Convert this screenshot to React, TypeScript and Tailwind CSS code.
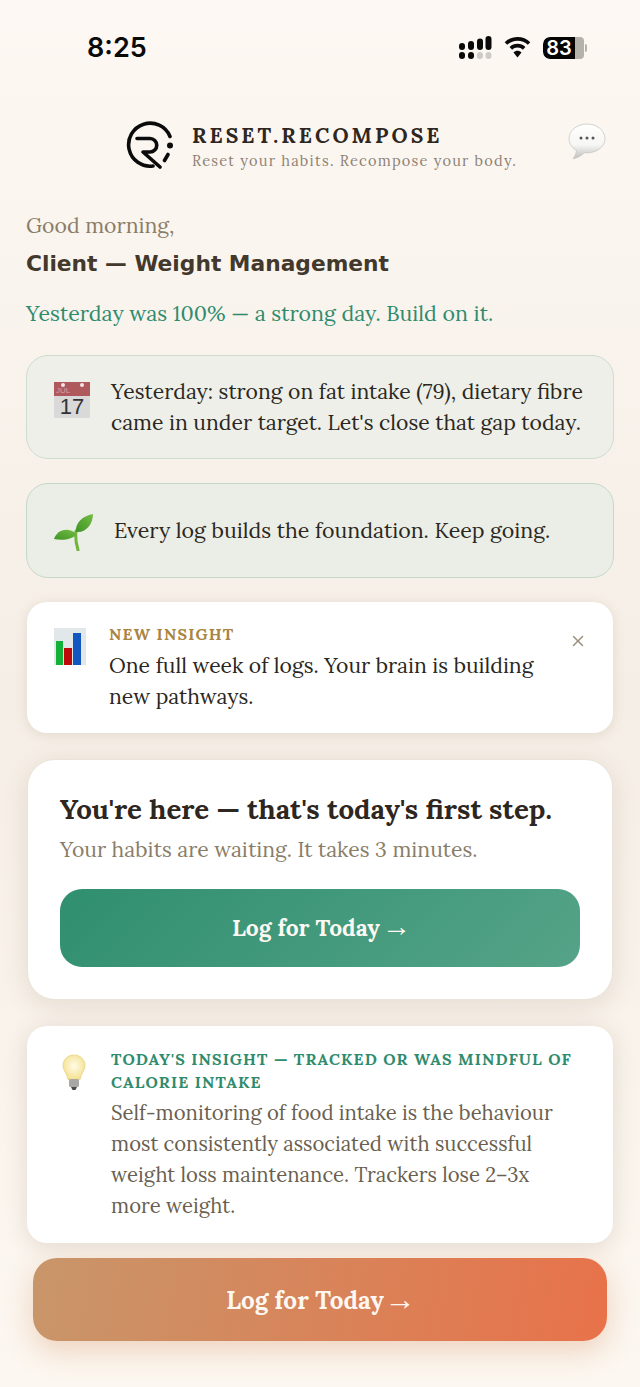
import { X } from "lucide-react";

const serif = "font-['Lora','Liberation_Serif',serif]";

const SignalIcon = () => (
  <svg width="33" height="23" viewBox="0 0 33 23" fill="#0a0a0a">
    <rect x="0" y="7" width="6" height="7" rx="3" />
    <rect x="9" y="5" width="6" height="9" rx="3" />
    <rect x="18" y="2.500" width="6" height="11.500" rx="3" />
    <rect x="26.500" y="0" width="6" height="14" rx="3" />
    <rect x="0" y="16" width="6" height="7" rx="3" />
    <rect x="9" y="16" width="6" height="7" rx="3" />
    <rect x="18" y="16" width="6" height="7" rx="3" fill="#cfccc8" />
    <rect x="26.500" y="16" width="6" height="7" rx="3" fill="#cfccc8" />
  </svg>
);

const WifiIcon = () => (
  <svg width="27" height="21" viewBox="0 0 28 22" fill="#0a0a0a">
    <path d="M14 0C8.800 0 4.100 2 .6 5.400l2.600 2.800C6 5.500 9.800 3.900 14 3.900s8 1.600 10.800 4.300l2.600-2.800C23.900 2 19.200 0 14 0Z" />
    <path d="M14 7.200c-3.200 0-6.100 1.200-8.300 3.300l2.700 2.800c1.500-1.400 3.400-2.200 5.600-2.200s4.100.8 5.600 2.200l2.700-2.800C20.100 8.400 17.200 7.200 14 7.200Z" />
    <path d="M14 14.500c-1.600 0-3.100.6-4.200 1.700L14 21.500l4.200-5.300c-1.100-1.100-2.600-1.700-4.200-1.700Z" />
  </svg>
);

const Logo = () => (
  <svg width="48" height="48" viewBox="0 0 48 48" fill="none" stroke="#0b0b0b" strokeWidth="3.600" strokeLinecap="round" strokeLinejoin="round">
    <path d="M44 15.500A21.500 21.500 0 1 0 27 45" />
    <path d="M11 17.500h13a6.500 6.500 0 0 1 0 13.500H17L34 46" />
    <circle cx="44" cy="24.500" r="3" fill="#0b0b0b" stroke="none" />
    <path d="M42 33.500l-3.500 6" />
  </svg>
);

const ChatBubble = () => (
  <svg width="38" height="38" viewBox="0 0 38 38">
    <defs>
      <linearGradient id="bubble" x1="0" y1="0" x2="0" y2="1">
        <stop offset="0" stopColor="#ffffff" />
        <stop offset=".6" stopColor="#f6f6f4" />
        <stop offset="1" stopColor="#bfc1bf" />
      </linearGradient>
    </defs>
    <path
      d="M19 1C9 1 1 7.500 1 15.500c0 5 3 9.300 7.500 11.900-.3 3-1.700 6-3.500 8.400 4-.8 8.600-3 11.200-6.100.9.100 1.900.2 2.800.2 10 0 18-6.500 18-14.400S29 1 19 1Z"
      fill="url(#bubble)"
      stroke="#c9c7c2"
      strokeWidth=".8"
    />
    <circle cx="13" cy="15" r="1.500" fill="#54565a" />
    <circle cx="19" cy="15" r="1.500" fill="#54565a" />
    <circle cx="25" cy="15" r="1.500" fill="#54565a" />
  </svg>
);

const CalendarIcon = () => (
  <div className="relative flex h-9 w-9 shrink-0 flex-col overflow-hidden">
    <div className="h-[14px] bg-[#b0595c] pl-[2px] font-['Liberation_Sans',sans-serif] text-[8px] leading-[18px] text-[#d9a0a0]">JUL</div>
    <div className="flex h-[22px] items-center justify-center bg-[#d9d9d9] font-['Liberation_Sans',sans-serif] text-[22px] leading-none text-[#333333]">17</div>
    <span className="absolute left-[7px] top-[1px] h-[4px] w-[4px] rounded-full bg-[#f0e6e6]" />
    <span className="absolute left-[26px] top-[1px] h-[4px] w-[4px] rounded-full bg-[#f0e6e6]" />
  </div>
);

const SproutIcon = () => (
  <svg width="40" height="37" viewBox="0 0 40 37" className="mt-[3px] shrink-0">
    <defs>
      <linearGradient id="leaf" x1="0" y1="1" x2="1" y2="0">
        <stop offset="0" stopColor="#3f9426" />
        <stop offset="1" stopColor="#74bd45" />
      </linearGradient>
    </defs>
    <path d="M22 17c-.8 6 .2 13 2 19" stroke="#6fb53c" strokeWidth="3" fill="none" strokeLinecap="round" />
    <path d="M0 25C3 16 13 12 23 20c-4 5-14 7-23 5Z" fill="url(#leaf)" />
    <path d="M22 18C21 9 28 2 39 0c0 9-6 19-17 18Z" fill="url(#leaf)" />
  </svg>
);

const ChartIcon = () => (
  <div className="flex h-[37px] w-[32px] shrink-0 items-end gap-[1px] bg-[#e2e8ea] pl-[2px] pr-[1px]">
    <div className="h-[24px] w-[7px] bg-[#12b13a]" />
    <div className="h-[17px] w-[8px] bg-[#bd0a0a]" />
    <div className="h-[32px] w-[8px] bg-[#1057c0]" />
  </div>
);

const BulbIcon = () => (
  <svg width="24" height="37" viewBox="0 0 24 37" className="shrink-0">
    <defs>
      <radialGradient id="glass" cx=".5" cy=".45" r=".6">
        <stop offset="0" stopColor="#fffce8" />
        <stop offset="1" stopColor="#f3df8a" />
      </radialGradient>
    </defs>
    <path d="M12 1C5.800 1 1 5.700 1 11.500c0 5 4 7.500 5 14h12c1-6.500 5-9 5-14C23 5.700 18.200 1 12 1Z" fill="url(#glass)" stroke="#ecd98e" strokeWidth="1" />
    <rect x="7" y="25" width="10" height="8" rx="1.500" fill="#a9a7a6" />
    <path d="M9 33h6l-1.500 3h-3Z" fill="#4b4a4c" />
  </svg>
);

export default function App() {
  return (
    <div className={`${serif} relative flex h-[1387px] w-[640px] flex-col overflow-hidden bg-gradient-to-b from-[#fdf8f3] via-[#f5eee6] to-[#fcf7f0]`}>
      {/* status bar */}
      <div className="flex h-[96px] shrink-0 items-start justify-between pl-[87px] pr-[53px] pt-[30px]">
        <span className="font-['Inter',sans-serif] text-[27px] font-semibold leading-[36px] text-[#0a0a0a]">8:25</span>
        <div className="mt-[6px] flex items-center gap-[12px]">
          <SignalIcon />
          <WifiIcon />
          <div className="flex items-center">
            <div className="flex h-[22px] w-[41px] items-center overflow-hidden rounded-l-[7px] rounded-r-[4px] bg-[#b5b2ac]">
              <div className="flex h-full w-[32px] items-center justify-center rounded-l-[7px] bg-[#050505] font-['Inter',sans-serif] text-[20px] font-semibold text-white">83</div>
            </div>
            <div className="ml-[1px] h-[8px] w-[2px] rounded-r bg-[#b5b2ac]" />
          </div>
        </div>
      </div>

      {/* brand header */}
      <div className="relative mt-[24px] flex h-[50px] shrink-0 items-center pl-[126px]">
        <Logo />
        <div className="ml-[18px] mt-[3px] flex flex-col gap-[1px]">
          <span className="text-[21px] font-bold leading-[28px] tracking-[3.100px] text-[#2e2620]">RESET.RECOMPOSE</span>
          <span className="text-[14.600px] leading-[20px] tracking-[1.200px] text-[#8d8276]">Reset your habits. Recompose your body.</span>
        </div>
        <div className="absolute left-[568px] top-[3px]">
          <ChatBubble />
        </div>
      </div>

      {/* greeting */}
      <div className="mt-[39px] shrink-0 px-[26px]">
        <p className="text-[21.200px] leading-[34px] text-[#8a7d68]">Good morning,</p>
        <p className="mt-[4px] font-['DejaVu_Sans',sans-serif] text-[21.750px] font-bold leading-[34px] text-[#43382c]">Client — Weight Management</p>
        <p className="mt-[16px] text-[21.350px] leading-[34px] text-[#2f8b6d]">Yesterday was 100% — a strong day. Build on it.</p>
      </div>

      {/* nudges */}
      <div className="mt-[24px] flex shrink-0 flex-col gap-[24px] px-[26px]">
        <div className="flex h-[104px] items-start rounded-[22px] border border-[#cfdcd0] bg-[#edefe8] pl-[27px] pr-[20px] pt-[20px]">
          <div className="mt-[6px]">
            <CalendarIcon />
          </div>
          <p className="ml-[21px] text-[21.150px] leading-[31px] text-[#2b2722]">
            Yesterday: strong on fat intake (79), dietary fibre came in under target. Let's close that gap today.
          </p>
        </div>
        <div className="flex h-[95px] items-center rounded-[22px] border border-[#c5d8c8] bg-[#ebeee6] pl-[27px] pr-[20px]">
          <SproutIcon />
          <p className="ml-[20px] text-[21.350px] leading-[31px] text-[#2b2722]">Every log builds the foundation. Keep going.</p>
        </div>
        <div className="relative mx-[1px] flex h-[131px] items-start rounded-[20px] bg-white pl-[27px] pr-[60px] pt-[20px] shadow-[0_2px_12px_rgba(110,90,60,0.14)]">
          <div className="mt-[6px]">
            <ChartIcon />
          </div>
          <div className="ml-[23px]">
            <p className="text-[16px] font-bold leading-[24px] tracking-[1.200px] text-[#a98442]">NEW INSIGHT</p>
            <p className="mt-[4px] text-[21.150px] leading-[31px] text-[#2b2722]">One full week of logs. Your brain is building new pathways.</p>
          </div>
          <X className="absolute left-[542px] top-[30px] h-[18px] w-[18px] text-[#9a917c]" strokeWidth={2} />
        </div>
      </div>

      {/* hero card */}
      <div className="mx-[27px] mt-[26px] flex h-[241px] shrink-0 flex-col rounded-[28px] border border-[#e9e3d9] bg-white px-[32px] pt-[30px] shadow-[0_6px_26px_rgba(110,90,60,0.14)]">
        <p className="text-[27.650px] font-bold leading-[38px] text-[#2e2620]">You're here — that's today's first step.</p>
        <p className="mt-[6px] text-[21.150px] leading-[32px] text-[#8a7d68]">Your habits are waiting. It takes 3 minutes.</p>
        <button className="mt-[23px] flex h-[78px] w-full items-center justify-center gap-[2px] rounded-[22px] bg-[linear-gradient(135deg,#2f8f6e,#55a388)] pl-[3px] text-[22.800px] font-bold text-[#fdf8f2]">
          <span>Log for Today</span>
          <span className="-mt-[4px] font-['Liberation_Serif',serif] text-[29px] font-normal leading-none">→</span>
        </button>
      </div>

      {/* daily insight */}
      <div className="mx-[27px] mt-[26px] flex h-[217px] shrink-0 items-start rounded-[20px] bg-white pl-[35px] pr-[40px] pt-[22px] shadow-[0_4px_22px_rgba(110,90,60,0.16)]">
        <div className="mt-[6px]">
          <BulbIcon />
        </div>
        <div className="ml-[25px]">
          <p className="-mr-[10px] text-[16px] font-bold leading-[23px] tracking-[1.120px] text-[#2f8b6d]">TODAY'S INSIGHT — TRACKED OR WAS MINDFUL OF CALORIE INTAKE</p>
          <p className="mt-[4px] text-[20.300px] leading-[31px] text-[#6a5f50]">Self-monitoring of food intake is the behaviour most consistently associated with successful weight loss maintenance. Trackers lose 2–3x more weight.</p>
        </div>
      </div>

      {/* sticky cta */}
      <button className="mx-[33px] mt-[15px] flex h-[83px] shrink-0 items-center justify-center gap-[1px] rounded-[24px] bg-[linear-gradient(100deg,#c8966a,#e8724a)] pl-[2px] pt-[4px] text-[24.300px] font-bold text-[#fdf8f2] shadow-[0_10px_28px_rgba(210,130,80,0.3)]">
        <span>Log for Today</span>
        <span className="-mt-[4px] font-['Liberation_Serif',serif] text-[31px] font-normal leading-none">→</span>
      </button>
    </div>
  );
}
